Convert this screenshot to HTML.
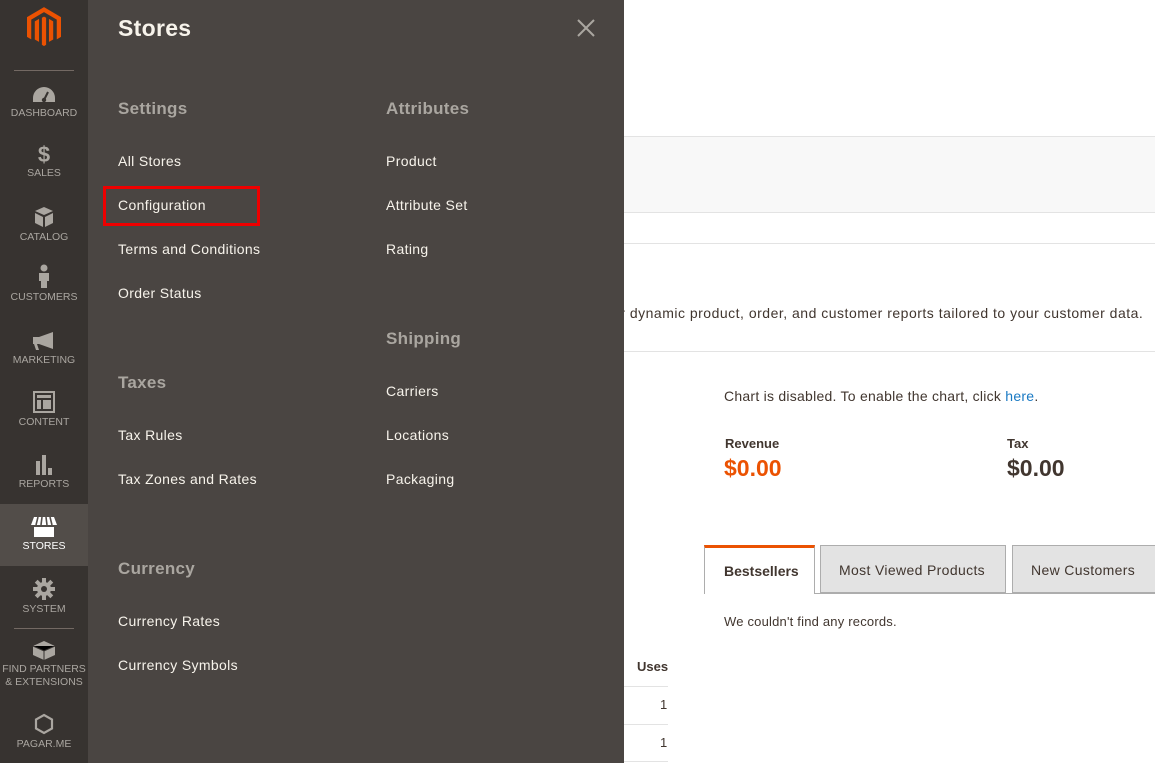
<!DOCTYPE html>
<html><head><meta charset="utf-8">
<style>
*{margin:0;padding:0;box-sizing:border-box}
body{width:1155px;height:763px;overflow:hidden;position:relative;background:#fff;font-family:"Liberation Sans",sans-serif;color:#303030}
.abs{position:absolute;white-space:nowrap}
#side{position:absolute;left:0;top:0;width:88px;height:763px;background:#373330}
.nav{position:absolute;left:0;width:88px;text-align:center;color:#aaa6a0;font-size:10.5px}
.nav svg{display:block;margin:0 auto 3px}
.sep{position:absolute;left:14px;width:60px;height:1px;background:#736963}
#panel{position:absolute;left:88px;top:0;width:536px;height:763px;background:#4a4542}
#panel .h{font-size:17px;color:#aaa6a0;font-weight:bold;letter-spacing:0.3px}
#panel .i{font-size:14px;color:#f7f3eb;letter-spacing:0.35px}
</style></head><body>
<div class="abs" style="left:624px;top:136px;width:531px;height:77px;background:#f8f8f8;border-top:1px solid #e3e3e3;border-bottom:1px solid #e3e3e3"></div>
<div class="abs" style="left:624px;top:243px;width:531px;height:1px;background:#e3e3e3"></div>
<div class="abs" style="left:612px;top:305px;font-size:14px;letter-spacing:0.5px;color:#41362f">ur dynamic product, order, and customer reports tailored to your customer data.</div>
<div class="abs" style="left:624px;top:351px;width:531px;height:1px;background:#e3e3e3"></div>
<div class="abs" style="left:724px;top:388px;font-size:14px;letter-spacing:0.25px;color:#41362f">Chart is disabled. To enable the chart, click <span style="color:#1979c3">here</span>.</div>
<div class="abs" style="left:725px;top:436px;font-size:13px;font-weight:bold;color:#41362f">Revenue</div>
<div class="abs" style="left:724px;top:455px;font-size:23px;font-weight:bold;color:#eb5202">$0.00</div>
<div class="abs" style="left:1007px;top:436px;font-size:13px;font-weight:bold;color:#41362f">Tax</div>
<div class="abs" style="left:1007px;top:455px;font-size:23px;font-weight:bold;color:#41362f">$0.00</div>
<div class="abs" style="left:704px;top:593px;width:451px;height:1px;background:#adadad"></div>
<div class="abs" style="left:704px;top:545px;width:111px;height:49px;background:#fff;border:1px solid #adadad;border-top:3px solid #eb5202;border-bottom:none;font-size:14px;font-weight:bold;color:#41362f;padding:15px 0 0 19px">Bestsellers</div>
<div class="abs" style="left:820px;top:545px;width:186px;height:48px;background:#e3e3e3;border:1px solid #adadad;font-size:14px;letter-spacing:0.35px;color:#41362f;padding:16px 0 0 18px">Most Viewed Products</div>
<div class="abs" style="left:1012px;top:545px;width:150px;height:48px;background:#e3e3e3;border:1px solid #adadad;font-size:14px;letter-spacing:0.35px;color:#41362f;padding:16px 0 0 18px">New Customers</div>
<div class="abs" style="left:724px;top:614px;font-size:13px;letter-spacing:0.2px;color:#41362f">We couldn't find any records.</div>
<div class="abs" style="left:637px;top:659px;font-size:13px;font-weight:bold;color:#41362f">Uses</div>
<div class="abs" style="left:624px;top:686px;width:44px;height:1px;background:#e3e3e3"></div>
<div class="abs" style="left:660px;top:697px;font-size:13px;color:#41362f">1</div>
<div class="abs" style="left:624px;top:724px;width:44px;height:1px;background:#e3e3e3"></div>
<div class="abs" style="left:660px;top:735px;font-size:13px;color:#41362f">1</div>
<div class="abs" style="left:624px;top:761px;width:44px;height:1px;background:#e3e3e3"></div>

<div id="side">
 <svg class="abs" style="left:27px;top:7px" width="34" height="40" viewBox="0 0 24 28"><path d="M12 0L24 7V21L21 22.7V8.8L12 3.5L3 8.8V22.7L0 21V7Z" fill="#eb5202"/><path d="M10.5 7.5L12 6.7L13.5 7.5V26.5L12 27.5L10.5 26.5Z" fill="#eb5202"/><path d="M5.5 10L8.5 8.3V24.5L5.5 22.8Z M18.5 10L15.5 8.3V24.5L18.5 22.8Z" fill="#eb5202"/></svg>
 <div class="sep" style="top:70px"></div>
 <div class="nav" style="top:86px"><svg width="24" height="18" viewBox="0 0 24 18"><path d="M12 1A11 11 0 0 0 1 12v4h22v-4A11 11 0 0 0 12 1z" fill="#aaa6a0"/><path d="M12 14l4-8" stroke="#373330" stroke-width="2"/><circle cx="12" cy="14" r="2.2" fill="#373330"/></svg>DASHBOARD</div>
 <div class="nav" style="top:143px"><div style="font-size:22px;font-weight:bold;line-height:24px">$</div>SALES</div>
 <div class="nav" style="top:206px"><svg width="22" height="22" viewBox="0 0 22 22"><path d="M11 1l9 4-9 4-9-4z M2 7l8 4v10l-8-4z M20 7l-8 4v10l8-4z" fill="#aaa6a0"/></svg>CATALOG</div>
 <div class="nav" style="top:264px"><svg width="12" height="24" viewBox="0 0 12 24"><circle cx="6" cy="4" r="3.5" fill="#aaa6a0"/><path d="M1 9h10v8h-2v7H3v-7H1z" fill="#aaa6a0"/></svg>CUSTOMERS</div>
 <div class="nav" style="top:331px"><svg width="24" height="20" viewBox="0 0 24 20"><path d="M1 6h6l14-5v17L7 13H5l2 6H4L2 13H1z" fill="#aaa6a0"/></svg>MARKETING</div>
 <div class="nav" style="top:391px"><svg width="22" height="22" viewBox="0 0 22 22"><rect x="1" y="1" width="20" height="20" fill="none" stroke="#aaa6a0" stroke-width="2"/><rect x="4" y="4" width="14" height="3" fill="#aaa6a0"/><rect x="4" y="9" width="4" height="9" fill="#aaa6a0"/><rect x="10" y="9" width="8" height="9" fill="#aaa6a0"/></svg>CONTENT</div>
 <div class="nav" style="top:455px"><svg width="22" height="20" viewBox="0 0 22 20"><rect x="3" y="6" width="4" height="14" fill="#aaa6a0"/><rect x="9" y="0" width="4" height="20" fill="#aaa6a0"/><rect x="15" y="13" width="4" height="7" fill="#aaa6a0"/></svg>REPORTS</div>
 <div class="abs" style="left:0;top:504px;width:88px;height:62px;background:#524d49"></div>
 <div class="nav" style="top:517px;color:#fff"><svg width="26" height="20" viewBox="0 0 26 20"><path d="M3 0h20l3 8H0z" fill="#fff"/><path d="M7 0l-2 8M11 0l-1 8M15 0l1 8M19 0l2 8" stroke="#524d49" stroke-width="1.6"/><path d="M3 10h20v10H3z" fill="#fff"/></svg>STORES</div>
 <div class="nav" style="top:578px"><svg width="22" height="22" viewBox="0 0 22 22"><circle cx="11" cy="11" r="7" fill="#aaa6a0"/><g stroke="#aaa6a0" stroke-width="4"><path d="M11 0v22M0 11h22M3.2 3.2l15.6 15.6M18.8 3.2L3.2 18.8"/></g><circle cx="11" cy="11" r="3" fill="#373330"/></svg>SYSTEM</div>
 <div class="sep" style="top:628px"></div>
 <div class="nav" style="top:638px;line-height:13px"><svg width="24" height="22" viewBox="0 0 24 22"><path d="M12 3l11 5v9l-11 5-11-5V8z" fill="#aaa6a0"/><path d="M1 8l11 5 11-5M12 13v9" stroke="#373330" stroke-width="1"/></svg>FIND PARTNERS<br>&amp; EXTENSIONS</div>
 <div class="nav" style="top:713px"><svg width="20" height="22" viewBox="0 0 20 22"><path d="M10 2l8 4.5v9L10 20l-8-4.5v-9z" fill="none" stroke="#aaa6a0" stroke-width="2.2"/></svg>PAGAR.ME</div>
</div>

<div id="panel">
 <div class="abs" style="left:30px;top:15px;font-size:23px;font-weight:bold;color:#f7f3eb;letter-spacing:0.3px">Stores</div>
 <svg class="abs" style="left:489px;top:19px" width="18" height="18" viewBox="0 0 18 18"><path d="M1 1l16 16M17 1L1 17" stroke="#aaa6a0" stroke-width="2"/></svg>
 <div class="abs h" style="left:30px;top:99px">Settings</div>
 <div class="abs i" style="left:30px;top:153px">All Stores</div>
 <div class="abs" style="left:15px;top:186px;width:157px;height:40px;border:3px solid #e00"></div>
 <div class="abs i" style="left:30px;top:197px">Configuration</div>
 <div class="abs i" style="left:30px;top:241px">Terms and Conditions</div>
 <div class="abs i" style="left:30px;top:285px">Order Status</div>
 <div class="abs h" style="left:30px;top:373px">Taxes</div>
 <div class="abs i" style="left:30px;top:427px">Tax Rules</div>
 <div class="abs i" style="left:30px;top:471px">Tax Zones and Rates</div>
 <div class="abs h" style="left:30px;top:559px">Currency</div>
 <div class="abs i" style="left:30px;top:613px">Currency Rates</div>
 <div class="abs i" style="left:30px;top:657px">Currency Symbols</div>
 <div class="abs h" style="left:298px;top:99px">Attributes</div>
 <div class="abs i" style="left:298px;top:153px">Product</div>
 <div class="abs i" style="left:298px;top:197px">Attribute Set</div>
 <div class="abs i" style="left:298px;top:241px">Rating</div>
 <div class="abs h" style="left:298px;top:329px">Shipping</div>
 <div class="abs i" style="left:298px;top:383px">Carriers</div>
 <div class="abs i" style="left:298px;top:427px">Locations</div>
 <div class="abs i" style="left:298px;top:471px">Packaging</div>
</div>
</body></html>
